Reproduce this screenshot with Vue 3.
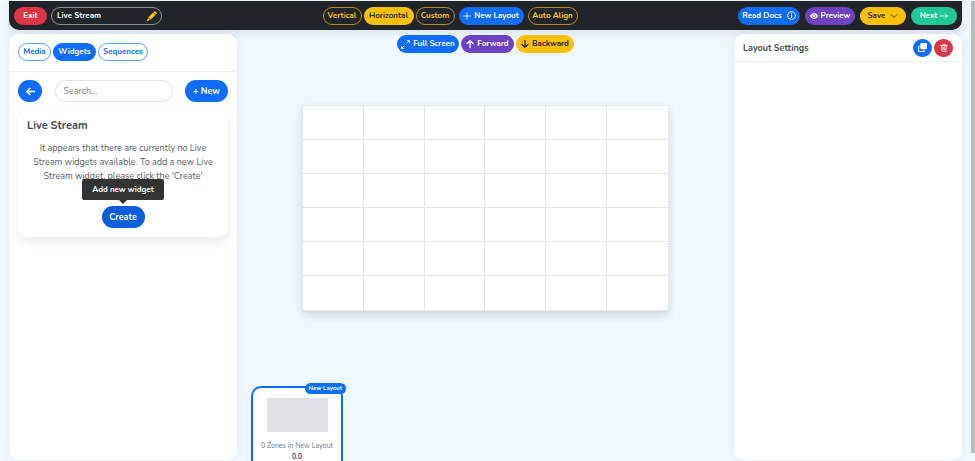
<template>
  <div class="editor">
    <header class="topbar">
      <div class="group">
        <button type="button" class="btn red w-xs">Exit</button>
        <div class="name-field">
          <input v-model="name" type="text" aria-label="Widget name" />
          <svg class="icon pencil" viewBox="0 0 16 16" aria-hidden="true">
            <path d="M12.9.2a.5.5 0 0 0-.7 0l-1.7 1.6 3.700 3.700 1.600-1.700a.5.5 0 0 0 0-.7zM9.800 2.500 2.200 10.100l3.700 3.700 7.600-7.600zM1.600 10.900.1 15.400a.4.4 0 0 0 .5.5l4.500-1.500z" />
          </svg>
        </div>
      </div>

      <div class="group">
        <div class="group tight">
          <button
            v-for="item in orientations"
            :key="item.label"
            type="button"
            :class="['btn', item.size, item.label === orientation ? 'yellow' : 'outline-yellow']"
            @click="orientation = item.label"
          >{{ item.label }}</button>
        </div>
        <button type="button" class="btn blue w-xl">
          <svg class="icon line" viewBox="0 0 16 16" aria-hidden="true"><path d="M8 1v14M1 8h14" /></svg>
          New Layout
        </button>
        <button type="button" class="btn outline-yellow w-md">Auto Align</button>
      </div>

      <div class="group wide">
        <button type="button" class="btn blue w-lg spread">
          Read Docs
          <svg class="icon big line" viewBox="0 0 16 16" aria-hidden="true"><circle cx="8" cy="8" r="7" /><path d="M8 7v5M8 4v.5" /></svg>
        </button>
        <button type="button" class="btn purple w-md">
          <svg class="icon" viewBox="0 0 16 16" aria-hidden="true">
            <path fill-rule="evenodd" d="M0 8s3-5.800 8-5.800S16 8 16 8s-3 5.800-8 5.800S0 8 0 8zm8 3.700a3.700 3.700 0 1 0 0-7.400 3.700 3.700 0 0 0 0 7.400z" />
            <circle cx="8" cy="8" r="2.600" />
          </svg>
          Preview
        </button>
        <button type="button" class="btn yellow w-sm spread">
          Save
          <svg class="icon line" viewBox="0 0 16 16" aria-hidden="true"><path d="m2 5 6 6 6-6" /></svg>
        </button>
        <button type="button" class="btn green w-sm">
          Next
          <svg class="icon line" viewBox="0 0 16 16" aria-hidden="true"><path d="M1 8h14M10 3l5 5-5 5" /></svg>
        </button>
      </div>
    </header>

    <main class="workspace">
      <aside class="panel">
        <nav class="tabs">
          <button
            v-for="item in tabs"
            :key="item.label"
            type="button"
            :class="['btn', item.size, item.label === tab ? 'blue' : 'outline-blue']"
            @click="tab = item.label"
          >{{ item.label }}</button>
        </nav>

        <div class="panel-body">
          <div class="search-row">
            <button type="button" class="btn blue large back" aria-label="Back">
              <svg class="icon big thick" viewBox="0 0 16 16" aria-hidden="true"><path d="M15 8H2M7 2.500 1.500 8 7 13.500" /></svg>
            </button>
            <input v-model="search" class="search" type="search" placeholder="Search..." aria-label="Search widgets" />
            <button type="button" class="btn blue large new">+ New</button>
          </div>

          <section class="card">
            <h2>Live Stream</h2>
            <p>
              It appears that there are currently no Live<br />
              Stream widgets available. To add a new Live<br />
              Stream widget, please click the 'Create'
            </p>
            <div class="create-wrap">
              <span id="create-tip" class="tooltip" role="tooltip">Add new widget</span>
              <button type="button" class="btn create large" aria-describedby="create-tip">Create</button>
            </div>
          </section>
        </div>
      </aside>

      <section class="stage">
        <div class="group tight">
          <button type="button" class="btn blue w-lg">
            <svg class="icon big line" viewBox="0 0 16 16" aria-hidden="true"><path d="M11 1h4v4M15 1l-4 4M1 11v4h4M1 15l4-4" /></svg>
            Full Screen
          </button>
          <button type="button" class="btn purple w-forward">
            <svg class="icon thick" viewBox="0 0 16 16" aria-hidden="true"><path d="M8 15V2M2 7l6-5.500L14 7" /></svg>
            Forward
          </button>
          <button type="button" class="btn yellow w-back">
            <svg class="icon thick" viewBox="0 0 16 16" aria-hidden="true"><path d="M8 1v13M2 9l6 5.500L14 9" /></svg>
            Backward
          </button>
        </div>

        <div class="canvas">
          <div v-for="n in 36" :key="n" class="cell"></div>
        </div>

        <div class="thumb">
          <span class="badge">New Layout</span>
          <div class="preview"></div>
          <div class="zones">0 Zones in New Layout</div>
          <div class="duration">0.0</div>
        </div>
      </section>

      <aside class="panel settings">
        <div class="settings-head">
          <h2>Layout Settings</h2>
          <div class="group tight">
            <button type="button" class="btn blue round" aria-label="Duplicate layout">
              <svg class="icon big" viewBox="0 0 16 16" aria-hidden="true">
                <path d="M6 0h8a2 2 0 0 1 2 2v7a2 2 0 0 1-2 2H6a2 2 0 0 1-2-2V2a2 2 0 0 1 2-2z" />
                <path d="M2.500 5H2a2 2 0 0 0-2 2v7a2 2 0 0 0 2 2h8a2 2 0 0 0 2-2v-1.500h-2V14H2V7h.5z" />
              </svg>
            </button>
            <button type="button" class="btn red round" aria-label="Delete layout">
              <svg class="icon line" viewBox="0 0 16 16" aria-hidden="true"><path d="M1 3h14M5.500 3V1h5v2M3 3l1 12h8l1-12M6 6v6M8 6v6M10 6v6" /></svg>
            </button>
          </div>
        </div>
      </aside>
    </main>

    <div class="scrollbar"></div>
  </div>
</template>

<script setup>
import { ref } from 'vue'

const orientations = [
  { label: 'Vertical', size: 'w-tab' },
  { label: 'Horizontal', size: 'w-md' },
  { label: 'Custom', size: 'w-tab' }
]

const tabs = [
  { label: 'Media', size: 'w-xs' },
  { label: 'Widgets', size: 'w-active' },
  { label: 'Sequences', size: 'w-md' }
]

const name = ref('Live Stream')
const search = ref('')
const orientation = ref('Horizontal')
const tab = ref('Widgets')
</script>

<style>
body {
  background: #f0f8ff;
  overflow: hidden;
}
</style>

<style scoped>
.editor,
.editor * {
  box-sizing: border-box;
}

.editor {
  position: relative;
  display: flex;
  flex-direction: column;
  height: 100vh;
  padding: 1px 13px 0 9px;
  overflow: hidden;
  background: #f0f8ff;
  color: #444b52;
  font-family: Nunito, Lato, 'Open Sans', sans-serif;
  font-size: 8px;
}

h2,
p {
  margin: 0;
}

.topbar {
  display: flex;
  align-items: center;
  justify-content: space-between;
  flex: none;
  height: 29px;
  padding: 0 5px;
  background: #212529;
  border-radius: 0 0 10px 10px;
  box-shadow: 0 4px 10px rgba(0, 0, 0, 0.08);
}

.group {
  display: flex;
  align-items: center;
  flex: none;
  gap: 4px;
}

.group.tight {
  gap: 2px;
}

.group.wide {
  gap: 5px;
}

.btn {
  display: inline-flex;
  align-items: center;
  justify-content: center;
  gap: 3px;
  height: 18px;
  padding: 0;
  border: 1px solid transparent;
  border-radius: 11px;
  font: inherit;
  font-weight: 700;
  line-height: 12px;
  white-space: nowrap;
  cursor: pointer;
}

.w-xs { min-width: 33px; }
.w-tab { min-width: 39px; }
.w-active { min-width: 43px; }
.w-sm { min-width: 46px; }
.w-md { min-width: 50px; }
.w-forward { min-width: 53px; }
.w-back { min-width: 58px; }
.w-lg { min-width: 62px; }
.w-xl { min-width: 65px; }

.spread {
  gap: 5px;
}

.large {
  height: 22px;
  font-size: 9px;
}

.back { width: 24px; }
.new { width: 43px; }

.round {
  width: 19px;
}

.red { background: #dc3545; color: #fff; }
.blue { background: #0d6efd; color: #fff; }
.purple { background: #6f42c1; color: #fff; }
.green { background: #20c997; color: #fff; }
.yellow { background: #ffc107; color: #212529; }

.outline-yellow {
  background: transparent;
  border-color: #b98e10;
  color: #ffc107;
}

.outline-blue {
  background: #fff;
  border-color: #5e9dfa;
  color: #0d6efd;
}

.icon {
  flex: none;
  width: 8px;
  height: 8px;
  fill: currentColor;
}

.icon.line,
.icon.thick {
  fill: none;
  stroke: currentColor;
  stroke-width: 1.5;
  stroke-linecap: round;
  stroke-linejoin: round;
}

.icon.thick {
  stroke-width: 2.5;
}

.icon.big {
  width: 9px;
  height: 9px;
}

.icon.pencil {
  width: 10px;
  height: 10px;
  color: #ffc107;
}

.name-field {
  display: flex;
  align-items: center;
  width: 111px;
  height: 18px;
  padding: 0 4px 0 5px;
  border: 1px solid #8b9095;
  border-radius: 9px;
}

.name-field input {
  flex: 1;
  min-width: 0;
  padding: 0;
  border: 0;
  outline: 0;
  background: transparent;
  color: #fff;
  font: inherit;
  font-weight: 700;
}

.workspace {
  display: flex;
  flex: 1;
  min-height: 0;
  padding: 4px 0 1px;
}

.panel {
  flex: none;
  width: 228px;
  background: #fff;
  border-radius: 10px;
  box-shadow: 0 0 10px rgba(40, 80, 120, 0.08);
}

.tabs {
  display: flex;
  gap: 2px;
  padding: 9px 9px 10px;
  border-bottom: 1px solid #f0f1f2;
}

.panel-body {
  padding: 8px 9px;
}

.search-row {
  display: flex;
  justify-content: space-between;
}

.search {
  width: 118px;
  height: 22px;
  padding: 0 8px;
  border: 1px solid #dee2e6;
  border-radius: 11px;
  outline: 0;
  background: #fff;
  color: #444b52;
  font: inherit;
  font-size: 9px;
}

.search::placeholder {
  color: #7b8187;
}

.card {
  margin-top: 8px;
  padding: 8px 9px 9px;
  border-radius: 10px;
  background: #fff;
  box-shadow: 0 5px 12px rgba(0, 0, 0, 0.08);
}

.card h2 {
  font-size: 11px;
  font-weight: 700;
  line-height: 16px;
}

.card p {
  margin-top: 7px;
  color: #596068;
  font-size: 9px;
  line-height: 14px;
  text-align: center;
  white-space: nowrap;
}

.create-wrap {
  position: relative;
  display: flex;
  justify-content: center;
  margin-top: 23px;
}

.create {
  width: 43px;
  background: #0b5ed7;
  color: #fff;
}

.tooltip {
  position: absolute;
  bottom: 28px;
  left: 50%;
  width: 82px;
  border-radius: 2px;
  background: #333;
  color: #fff;
  font-weight: 700;
  line-height: 21px;
  text-align: center;
  transform: translateX(-50%);
}

.tooltip::after {
  content: '';
  position: absolute;
  top: 100%;
  left: 50%;
  margin-left: -4px;
  border: 4px solid transparent;
  border-top-color: #333;
  border-bottom: 0;
}

.stage {
  display: flex;
  flex: 1;
  flex-direction: column;
  align-items: center;
  min-width: 0;
  padding: 1px 14px 0;
}

.canvas {
  display: grid;
  flex: none;
  grid-template-columns: repeat(6, 1fr);
  width: calc(100% - 102px);
  margin-top: 52px;
  border: 1px solid #e9ebed;
  border-radius: 2px;
  background: #fff;
  box-shadow: 0 4px 8px rgba(0, 0, 0, 0.14);
}

.cell {
  height: 34px;
  border-right: 1px solid #e2e4e6;
  border-bottom: 1px solid #e2e4e6;
}

.cell:nth-child(6n) {
  border-right: 0;
}

.cell:nth-child(n + 31) {
  border-bottom: 0;
}

.thumb {
  position: relative;
  display: flex;
  flex: none;
  flex-direction: column;
  align-items: center;
  align-self: flex-start;
  width: 92px;
  height: 84px;
  margin-top: 75px;
  padding-top: 10px;
  border: 2px solid #0d6efd;
  border-radius: 10px;
  background: #fff;
}

.badge {
  position: absolute;
  top: -5px;
  right: -5px;
  padding: 0 4px;
  border-radius: 6px;
  background: #0d6efd;
  color: #fff;
  font-size: 6px;
  font-weight: 700;
  line-height: 11px;
}

.preview {
  width: 61px;
  height: 34px;
  background: #dee2e6;
}

.zones,
.duration {
  font-size: 7px;
  line-height: 11px;
}

.zones {
  margin-top: 8px;
  color: #6c757d;
}

.duration {
  font-weight: 700;
}

.settings-head {
  display: flex;
  align-items: center;
  justify-content: space-between;
  height: 28px;
  padding: 0 9px;
  border-bottom: 1px solid #f0f1f2;
}

.settings-head h2 {
  font-size: 9px;
  font-weight: 700;
}

.scrollbar {
  position: absolute;
  top: 1px;
  right: 0;
  bottom: 8px;
  width: 4px;
  background: #b9bcbe;
}
</style>
